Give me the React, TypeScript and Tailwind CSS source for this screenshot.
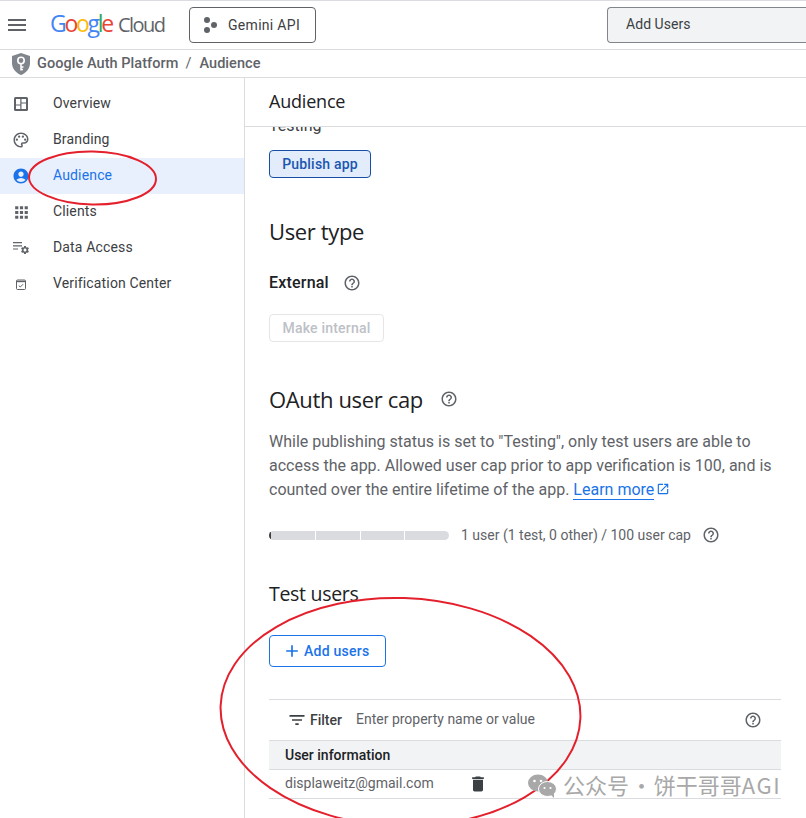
import React from "react";
import { MdMenu, MdOutlinePalette, MdAccountCircle, MdApps, MdHelpOutline, MdFilterList, MdDelete, MdAdd, MdOpenInNew, MdSettings } from "react-icons/md";

const Dash = () => (
  <svg width="14" height="14" viewBox="0 0 14 14"><rect width="14" height="14" rx="1.500" fill="#5f6368" /><rect x="2" y="2" width="4.300" height="5.500" fill="#fff" /><rect x="2" y="8.500" width="4.300" height="3.500" fill="#fff" /><rect x="7.500" y="2" width="4.500" height="3.500" fill="#fff" /><rect x="7.500" y="6.500" width="4.500" height="5.500" fill="#fff" /></svg>
);
const DataAccess = () => (
  <span className="relative block h-[16px] w-[16px]">
    <svg width="16" height="16" viewBox="0 0 16 16"><path d="M0 2h9v1.2H0zM0 5.2h9v1.2H0zM0 8.4h5v1.2H0z" fill="#5f6368" /></svg>
    <MdSettings className="absolute left-[7px] top-[5px] text-[#5f6368]" size={10} />
  </span>
);
const Verify = () => (
  <svg width="10" height="11" viewBox="0 0 10 11" fill="none"><rect x=".5" y="1" width="9" height="9.500" rx="1" stroke="#5f6368" /><path d="M.5 2.500h9" stroke="#5f6368" strokeWidth="1.400" /><path d="M2.800 6.600l1.500 1.400 2.800-2.800" stroke="#5f6368" /></svg>
);

const items: { label: string; icon: React.ReactNode; active?: boolean }[] = [
  { label: "Overview", icon: <Dash /> },
  { label: "Branding", icon: <MdOutlinePalette size={18} className="text-[#5f6368]" /> },
  { label: "Audience", icon: <MdAccountCircle size={18} className="text-[#1a73e8]" />, active: true },
  { label: "Clients", icon: <MdApps size={19} className="text-[#5f6368]" /> },
  { label: "Data Access", icon: <DataAccess /> },
  { label: "Verification Center", icon: <Verify /> },
];

const Help = ({ size = 18 }: { size?: number }) => <MdHelpOutline size={size} className="text-[#5f6368]" />;

export default function App() {
  return (
    <div className="relative flex h-[818px] w-[806px] flex-col overflow-hidden bg-white font-['Roboto',sans-serif] text-[#202124]">
      <header className="flex h-[50px] shrink-0 items-center border-t border-b border-[#dadce0]">
        <MdMenu size={24} className="ml-[5px] text-[#5f6368]" />
        <div className="-mt-[3px] ml-[21px] flex w-[118px] items-baseline font-['Open_Sans',sans-serif] leading-none">
          <span className="text-[23px] tracking-[-2.300px]"><span className="text-[#4285f4]">G</span><span className="text-[#ea4335]">o</span><span className="text-[#fbbc05]">o</span><span className="text-[#4285f4]">g</span><span className="text-[#34a853]">l</span><span className="text-[#ea4335]">e</span></span>
          <span className="ml-[6px] text-[20px] tracking-[-1.500px] text-[#5f6368]">Cloud</span>
        </div>
        <button className="ml-[21px] flex h-[36px] w-[127px] items-center rounded border border-[#5f6368] pl-[13px] text-[14px] tracking-[0.3px] text-[#3c4043]">
          <svg width="15" height="16" viewBox="0 0 15 16" fill="#5f6368" className="-mt-[1px]"><circle cx="4" cy="3" r="3" /><circle cx="11" cy="8" r="3" /><circle cx="4" cy="13" r="3" /></svg>
          <span className="ml-[10px]">Gemini API</span>
        </button>
        <div className="ml-auto flex h-[36px] w-[199px] items-center rounded-l border border-r-0 border-[#80868b] bg-[#f1f3f4] pb-[2px] pl-[18px] text-[14px] tracking-[0.05px] text-[#3c4043]">Add Users</div>
      </header>

      <div className="flex h-[28px] shrink-0 items-center border-b border-[#dadce0] pl-[12px] text-[14.500px] font-medium tracking-[0.05px] text-[#5f6368]">
        <svg width="18" height="22" viewBox="0 0 18 22"><path d="M9 0l9 3v7c0 5.500-3.800 10-9 12C3.800 20 0 15.500 0 10V3z" fill="#80868b" /><circle cx="9" cy="7.500" r="3.200" fill="none" stroke="#fff" strokeWidth="1.600" /><path d="M9 10.500v7M9 14h2.500M9 16.500h2" stroke="#fff" strokeWidth="1.500" /></svg>
        <span className="ml-[7px]">Google Auth Platform</span>
        <span className="ml-[7px] font-normal">/</span>
        <span className="ml-[8px]">Audience</span>
      </div>

      <div className="flex min-h-0 flex-1">
        <aside className="w-[245px] shrink-0 border-r border-[#dadce0] pt-[8px]">
          {items.map((it) => (
            <div key={it.label} className={`flex h-[36px] items-center text-[14px] tracking-[0.15px] ${it.active ? "bg-[#e8f0fe] text-[#1a73e8]" : "text-[#3c4043]"}`}>
              <span className="flex w-[42px] justify-center">{it.icon}</span>
              <span className="ml-[11px] -mt-[2px]">{it.label}</span>
            </div>
          ))}
        </aside>

        <main className="flex min-w-0 flex-1 flex-col">
          <div className="flex h-[49px] shrink-0 items-center border-b border-[#dadce0] pb-[2px] pl-[24px] font-['Open_Sans',sans-serif] text-[18px] tracking-[-0.2px] text-[#202124]">Audience</div>
          <div className="min-h-0 flex-1 overflow-hidden pl-[24px] pr-[25px]">
            <div className="-mt-[13px] h-[24px] text-[16px] leading-[24px] text-[#3c4043]">Testing</div>
            <button className="mt-[12px] flex h-[28px] w-[102px] items-center justify-center rounded border border-[#174ea6] bg-[#e2ecfa] text-[14px] font-medium tracking-[0.2px] text-[#1a56b0]">Publish app</button>

            <h2 className="mt-[39px] font-['Open_Sans',sans-serif] text-[22px] leading-[28px] tracking-[-0.35px] text-[#202124]">User type</h2>
            <div className="mt-[26px] flex h-[24px] items-center text-[16px] font-medium tracking-[0.2px] text-[#202124]">
              External<span className="ml-[14px]"><Help /></span>
            </div>
            <button className="mt-[19px] flex h-[28px] w-[115px] items-center justify-center rounded border border-[#e4e6e8] text-[14px] font-medium tracking-[0.2px] text-[#bdc1c6]">Make internal</button>

            <div className="mt-[43px] flex h-[28px] items-center font-['Open_Sans',sans-serif] text-[22px] tracking-[-0.35px] text-[#202124]">
              OAuth user cap<span className="ml-[17px]"><Help /></span>
            </div>
            <p className="mt-[17px] w-[512px] text-[16px] leading-[24px] text-[#5f6368]">
              While publishing status is set to "Testing", only test users are able to access the app. Allowed user cap prior to app verification is 100, and is counted over the entire lifetime of the app.{" "}
              <a className="border-b border-[#1a73e8] text-[#1a73e8]">Learn more</a>
              <MdOpenInNew size={14} className="ml-[2px] inline-block align-[-1px] text-[#1a73e8]" />
            </p>

            <div className="mt-[21px] flex h-[24px] items-center">
              <div className="flex h-[9px] w-[180px] gap-px overflow-hidden rounded-full">
                <div className="flex-1 border-l-2 border-[#3c4043] bg-[#d9dbdf]" />
                <div className="flex-1 bg-[#d9dbdf]" />
                <div className="flex-1 bg-[#d9dbdf]" />
                <div className="flex-1 bg-[#d9dbdf]" />
              </div>
              <span className="ml-[12px] text-[14px] text-[#5f6368]">1 user (1 test, 0 other) / 100 user cap</span>
              <span className="ml-[11px]"><Help /></span>
            </div>

            <h3 className="mt-[35px] font-['Open_Sans',sans-serif] text-[19.500px] leading-[24px] tracking-[-0.3px] text-[#202124]">Test users</h3>
            <button className="mt-[29px] flex h-[32px] w-[117px] items-center rounded border border-[#1a73e8] pl-[12px] text-[14px] font-medium tracking-[0.25px] text-[#1a73e8]">
              <MdAdd size={20} /><span className="ml-[2px]">Add users</span>
            </button>

            <div className="mt-[32px] w-[512px] text-[14px]">
              <div className="flex h-[42px] items-center border-t border-b border-[#dadce0] pl-[18px] pr-[19px]">
                <MdFilterList size={20} className="text-[#3c4043]" />
                <span className="ml-[3px] font-medium text-[#3c4043]">Filter</span>
                <span className="-mt-[2px] ml-[14px] text-[#5f6368]">Enter property name or value</span>
                <span className="ml-auto"><Help /></span>
              </div>
              <div className="flex h-[29px] items-center border-b border-[#dadce0] bg-[#f1f3f4] pl-[16px] font-medium text-[#202124]">User information</div>
              <div className="flex h-[29px] items-center border-b border-[#dadce0] pl-[16px] text-[#5f6368]">
                <span className="-mt-[2px] w-[183px]">displaweitz@gmail.com</span>
                <MdDelete size={20} className="text-[#3c4043]" />
              </div>
            </div>
          </div>
        </main>
      </div>

      {/* hand-drawn annotation ellipses */}
      <svg className="pointer-events-none absolute left-0 top-0" width="806" height="818" fill="none" stroke="#e3202c" strokeWidth="2">
        <ellipse cx="92.500" cy="178" rx="63.500" ry="26.500" transform="rotate(1 92.500 178)" />
        <ellipse cx="400.500" cy="712" rx="180" ry="114" transform="rotate(2 400 712)" />
      </svg>

      {/* watermark */}
      <div className="absolute left-[527px] top-[771px] flex h-[30px] w-[254px] items-center overflow-hidden whitespace-nowrap font-['Noto_Sans_CJK_SC',sans-serif] text-[22px] text-[#a8a8a8]">
        <svg width="31" height="26" viewBox="0 0 31 26" className="shrink-0" fill="#a8a8a8">
          <ellipse cx="11" cy="10" rx="10" ry="8.500" />
          <ellipse cx="20.500" cy="16" rx="9" ry="7.500" stroke="#fff" strokeWidth="1" />
          <path d="M24 22l3 3v-5z" />
          <circle cx="7.500" cy="8" r="1.300" fill="#fff" /><circle cx="14" cy="8" r="1.300" fill="#fff" />
          <circle cx="17.500" cy="15" r="1.100" fill="#fff" /><circle cx="23.500" cy="15" r="1.100" fill="#fff" />
        </svg>
        <span className="-mt-[3px] ml-[5px] [word-spacing:-3.500px]">公众号 · 饼干哥哥<span className="tracking-[1.500px]">AGI</span></span>
      </div>
    </div>
  );
}
